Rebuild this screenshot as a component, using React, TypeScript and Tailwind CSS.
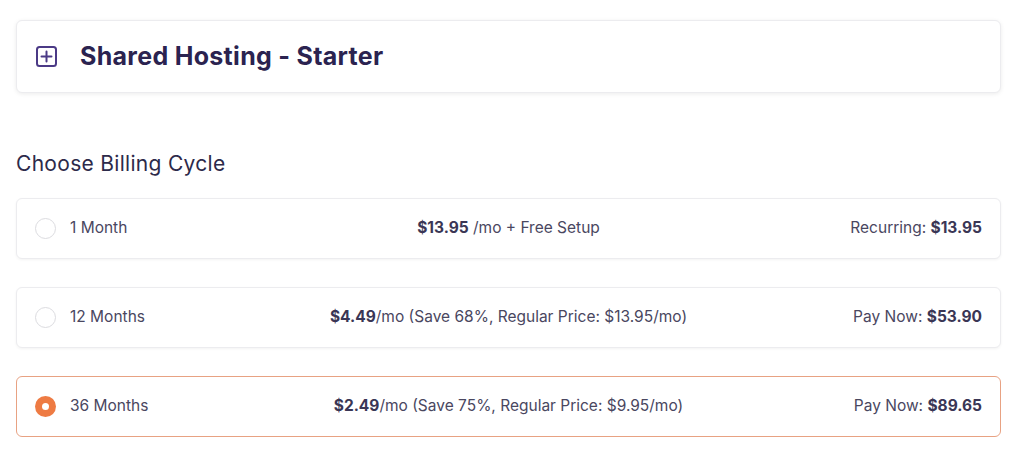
import React, { useState } from "react";

type Cycle = {
  id: string;
  label: string;
  price: string;
  detail: string;
  rightLabel: string;
  rightValue: string;
};

const cycles: Cycle[] = [
  {
    id: "1",
    label: "1 Month",
    price: "$13.95",
    detail: " /mo + Free Setup",
    rightLabel: "Recurring:",
    rightValue: "$13.95",
  },
  {
    id: "12",
    label: "12 Months",
    price: "$4.49",
    detail: "/mo (Save 68%, Regular Price: $13.95/mo)",
    rightLabel: "Pay Now:",
    rightValue: "$53.90",
  },
  {
    id: "36",
    label: "36 Months",
    price: "$2.49",
    detail: "/mo (Save 75%, Regular Price: $9.95/mo)",
    rightLabel: "Pay Now:",
    rightValue: "$89.65",
  },
];

function PlusBox() {
  return (
    <svg width="21" height="21" viewBox="0 0 21 21" fill="none">
      <rect x="1" y="1" width="19" height="19" rx="2.5" stroke="#4b3a86" strokeWidth="2" />
      <path d="M10.5 5.5v10M5.5 10.5h10" stroke="#4b3a86" strokeWidth="2" strokeLinecap="round" />
    </svg>
  );
}

export default function App() {
  const [selected, setSelected] = useState("36");

  return (
    <div
      className="min-h-[469px] bg-white pl-4 pr-[23px] pt-5 text-[#4a475f]"
      style={{ fontFamily: "Inter, 'Noto Sans', sans-serif" }}
    >
      <div className="flex h-[73px] items-center gap-[23px] rounded-md border border-[#ececef] bg-white pl-[19px] shadow-[0_1px_4px_rgba(0,0,0,0.08)]">
        <PlusBox />
        <h2 className="text-[25px] font-bold tracking-[0.3px] text-[#2b2350]">
          Shared Hosting - Starter
        </h2>
      </div>

      <h3 className="mt-[55px] text-[21px] tracking-[0.3px] text-[#2d2a4a]">Choose Billing Cycle</h3>

      <div className="mt-[18px] flex flex-col gap-[28px]">
        {cycles.map((c) => {
          const active = c.id === selected;
          return (
            <button
              key={c.id}
              onClick={() => setSelected(c.id)}
              className={
                "grid h-[61px] grid-cols-[1fr_auto_1fr] items-center rounded-md border bg-white pl-[18px] pr-[18px] text-left text-[15.5px] " +
                (active
                  ? "border-[#e8a283]"
                  : "border-[#ececef] shadow-[0_1px_3px_rgba(0,0,0,0.05)]")
              }
            >
              <span className="flex items-center gap-[14px]">
                {active ? (
                  <span className="flex h-[21px] w-[21px] items-center justify-center rounded-full bg-[#ee7b43]">
                    <span className="h-[7px] w-[7px] rounded-full bg-white" />
                  </span>
                ) : (
                  <span className="h-[21px] w-[21px] rounded-full border border-[#dcdce0]" />
                )}
                <span>{c.label}</span>
              </span>
              <span>
                <b className="font-bold text-[#3a3655]">{c.price}</b>
                {c.detail}
              </span>
              <span className="text-right">
                {c.rightLabel} <b className="font-bold text-[#3a3655]">{c.rightValue}</b>
              </span>
            </button>
          );
        })}
      </div>
    </div>
  );
}
